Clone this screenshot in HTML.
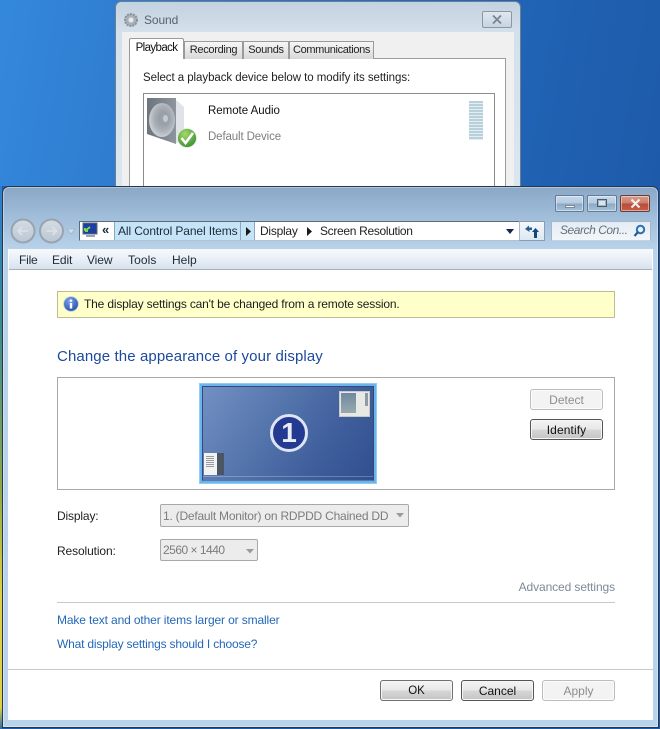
<!DOCTYPE html>
<html><head><meta charset="utf-8"><style>
*{box-sizing:border-box}
html,body{margin:0;padding:0}
body{width:660px;height:729px;position:relative;overflow:hidden;background:linear-gradient(100deg,#3488dc 0%,#2f7dd0 17%,#2266b8 60%,#1c55a4 100%);font-family:"Liberation Sans",sans-serif;font-size:12px;color:#1a1a1a}
div,span.a{position:absolute}
.t{position:absolute;white-space:nowrap;line-height:16px;height:16px}
.btn{position:absolute;border:1px solid #707070;border-radius:3px;background:linear-gradient(#f4f4f4 0%,#e8e8e8 48%,#d6d6d6 52%,#c4c4c4 100%);box-shadow:inset 0 0 0 1px #f6f6f6;text-align:center;line-height:20px;white-space:nowrap;color:#111}
.dis{border-color:#bcbcbc;background:#f3f3f3;color:#8d8d8d;box-shadow:inset 0 0 0 1px #fbfbfb}
.sel{position:absolute;border:1px solid #a8a8a8;border-radius:2px;background:#ececec;color:#7c7c7c;line-height:22px;padding-left:2px;white-space:nowrap}
.wb{position:absolute;top:195px;height:17px;border:1px solid #5f7c98;border-radius:2px;background:linear-gradient(#c6d9ea 0%,#b4cbe0 48%,#8ea9c4 52%,#a6c0d8 100%);box-shadow:inset 0 0 0 1px rgba(255,255,255,.45)}
.tab{position:absolute;border:1px solid #9a9a9a;border-bottom:0;background:linear-gradient(#f6f6f6,#d8d8d8);text-align:center;white-space:nowrap;color:#222;font-size:11px;letter-spacing:-.3px}
</style></head><body>

<!-- Sound window -->
<div style="left:115px;top:1px;width:406px;height:186px;border:1px solid #6a7e94;border-bottom:0;border-radius:6px 6px 0 0;background:linear-gradient(#c3d2e0 0,#d4e0ea 30px,#dbe6ef 100%)"></div>
<div style="left:122px;top:32px;width:392px;height:155px;background:#f0f0f0"></div>
<svg style="position:absolute;left:123px;top:12px" width="16" height="16" viewBox="0 0 16 16"><circle cx="8" cy="8" r="6" fill="#a8b0b8" stroke="#8a929a" stroke-dasharray="2 1" stroke-width="2"/><circle cx="8" cy="8" r="2.500" fill="#e8ecf0"/></svg>
<div class="t" style="left:144px;top:12px;color:#5a626c;font-size:12px;letter-spacing:-.1px">Sound</div>
<div style="left:482px;top:11px;width:30px;height:17px;border:1px solid #8a98a6;border-radius:2px;background:linear-gradient(#dfe8f0,#c8d4e0)"></div>
<svg style="position:absolute;left:491px;top:14px" width="12" height="11" viewBox="0 0 12 11"><path d="M2 1.500L10 9.500M10 1.500L2 9.500" stroke="#7a8490" stroke-width="1.800"/></svg>

<div style="left:129px;top:58px;width:377px;height:129px;background:#fff;border:1px solid #9c9c9c;border-bottom:0"></div>
<div class="tab" style="left:184px;top:41px;width:59px;height:18px;line-height:17px">Recording</div>
<div class="tab" style="left:243px;top:41px;width:46px;height:18px;line-height:17px">Sounds</div>
<div class="tab" style="left:289px;top:41px;width:85px;height:18px;line-height:17px;letter-spacing:-.35px">Communications</div>
<div class="tab" style="left:129px;top:38px;width:55px;height:21px;line-height:19px;background:#fff;font-size:11.500px;letter-spacing:-.6px;color:#111;border-radius:2px 2px 0 0">Playback</div>

<div class="t" style="left:143px;top:70px;font-size:11.500px;color:#222;letter-spacing:-.06px">Select a playback device below to modify its settings:</div>
<div style="left:143px;top:93px;width:352px;height:94px;border:1px solid #8c8c8c;border-bottom:0;background:#fff"></div>
<svg style="position:absolute;left:146px;top:97px" width="54" height="52" viewBox="0 0 54 52">
<defs><linearGradient id="sp" x1="0" y1="0" x2="1" y2="0"><stop offset="0" stop-color="#6c747e"/><stop offset="1" stop-color="#8e959e"/></linearGradient>
<radialGradient id="cone" cx=".55" cy=".45" r=".6"><stop offset="0" stop-color="#8a9098"/><stop offset=".6" stop-color="#aab0b6"/><stop offset="1" stop-color="#d4d8dc"/></radialGradient>
<radialGradient id="ck" cx=".4" cy=".3" r=".8"><stop offset="0" stop-color="#a6d86a"/><stop offset="1" stop-color="#2f8a2c"/></radialGradient></defs>
<path d="M29 2L38 10L38 40L29 47Z" fill="#dfe2e6"/>
<path d="M1 1L30 1L30 47L1 37Z" fill="url(#sp)"/>
<ellipse cx="16" cy="23" rx="13" ry="17" fill="url(#cone)"/>
<ellipse cx="19" cy="22" rx="5" ry="7" fill="#9aa1a8"/>
<ellipse cx="19.500" cy="21.500" rx="2.500" ry="3.500" fill="#c4c9ce"/>
<circle cx="41" cy="41" r="9.500" fill="url(#ck)" stroke="#e4ede0" stroke-width=".8"/>
<path d="M35.500 41L39.500 46L47 36" fill="none" stroke="#fff" stroke-width="2.600"/>
</svg>
<div class="t" style="left:208px;top:103px;font-size:11.500px;color:#111;letter-spacing:-.03px">Remote Audio</div>
<div class="t" style="left:208px;top:129px;font-size:11.500px;color:#7e7e7e;letter-spacing:-.13px">Default Device</div>
<div style="left:469px;top:101px;width:14px;height:39px;background:repeating-linear-gradient(#b7d1dc 0,#b7d1dc 2px,#e4eef2 2px,#e4eef2 3px)"></div>

<!-- Main window -->
<div style="left:0;top:186px;width:2px;height:543px;background:linear-gradient(#2f7dd0 0,#3a8a90 25%,#8aa84a 55%,#e0d040 75%,#e0d040 96%,#2a6ab0 100%)"></div>
<div style="left:2px;top:186px;width:658px;height:543px;background:#1f5aa8"></div>
<div style="left:2px;top:186px;width:657px;height:542px;border:1px solid #26384e;border-radius:7px 7px 0 0;background:linear-gradient(#8aa8c6 0,#a0bdda 30px,#b9d3ea 64px,#b9d3ea 100%)"></div>
<div style="left:3px;top:187px;width:655px;height:540px;border:1px solid rgba(255,255,255,.35);border-radius:6px 6px 0 0"></div>
<div style="left:8px;top:249px;width:645px;height:471px;background:#fff"></div>

<div class="wb" style="left:555px;width:29px"></div>
<div style="left:565px;top:205px;width:10px;height:3px;background:#f0f4f8;border:1px solid #7a8a9c"></div>
<div class="wb" style="left:587px;width:30px"></div>
<div style="left:597px;top:199px;width:10px;height:8px;border:1px solid #4a5a6a;background:#d8e4ee;box-shadow:inset 0 0 0 1px #9fb4c8"></div>
<div class="wb" style="left:620px;width:30px;border-color:#6a3c34;background:linear-gradient(#d89c8c 0%,#cc7c6a 48%,#b84c38 52%,#c4604a 100%)"></div>
<svg style="position:absolute;left:629px;top:198px" width="13" height="11" viewBox="0 0 13 11"><path d="M2.500 1.500L10.500 9.500M10.500 1.500L2.500 9.500" stroke="#f4eeec" stroke-width="2.200"/></svg>

<!-- Nav -->
<svg style="position:absolute;left:9px;top:216px" width="72" height="30" viewBox="0 0 72 30">
<defs><linearGradient id="nv" x1="0" y1="0" x2="0" y2="1"><stop offset="0" stop-color="#d4dce4"/><stop offset=".5" stop-color="#c8d2dc"/><stop offset="1" stop-color="#bac6d2"/></linearGradient></defs>
<circle cx="14" cy="15" r="11.500" fill="url(#nv)" stroke="#98a4b0" stroke-width="2"/>
<circle cx="42.500" cy="15" r="11.500" fill="url(#nv)" stroke="#98a4b0" stroke-width="2"/>
<path d="M19 15H9M13 11L9 15L13 19" fill="none" stroke="#dbe2e9" stroke-width="1.600"/>
<path d="M37.500 15H47.500M43.500 11L47.500 15L43.500 19" fill="none" stroke="#dbe2e9" stroke-width="1.600"/>
<path d="M58 13H66L62 18Z" fill="#d4dfe9" stroke="#a4b4c4" stroke-width=".8"/>
</svg>

<!-- Address -->
<div style="left:79px;top:221px;width:441px;height:20px;background:#fff;border:1px solid #5a6b7c;border-right-color:#9fb0c0;border-bottom-color:#b4c2d0"></div>
<svg style="position:absolute;left:82px;top:222px" width="17" height="17" viewBox="0 0 17 17"><rect x="1" y="1" width="14" height="11" fill="#1e3ea0" stroke="#5c6a80"/><path d="M3 9L8 5M3 9L3 6M3 9L6 9" stroke="#6fe04a" stroke-width="2" fill="none"/><rect x="4" y="13" width="9" height="2" fill="#9aa4ae"/></svg>
<div class="t" style="left:102px;top:222px;font-size:13px;font-weight:bold;color:#1a2a3a;line-height:16px">«</div>
<div style="left:114px;top:222px;width:127px;height:18px;background:#c6e4f8;border-left:1px solid #8aa8c0;border-right:1px solid #8aa8c0"></div>
<div class="t" style="left:118px;top:223px;font-size:12px;color:#1a2a3a;letter-spacing:-.11px">All Control Panel Items</div>
<div style="left:241px;top:222px;width:14px;height:18px;background:#c6e4f8;border-right:1px solid #8aa8c0"></div>
<svg style="position:absolute;left:246px;top:227px" width="6" height="9"><path d="M0 0L5 4.500L0 9Z" fill="#1a1a1a"/></svg>
<div class="t" style="left:260px;top:223px;font-size:12px;letter-spacing:-.25px;color:#222">Display</div>
<svg style="position:absolute;left:307px;top:227px" width="6" height="9"><path d="M0 0L5 4.500L0 9Z" fill="#1a1a1a"/></svg>
<div class="t" style="left:320px;top:223px;font-size:12px;letter-spacing:-.32px;color:#222">Screen Resolution</div>
<svg style="position:absolute;left:506px;top:229px" width="9" height="5"><path d="M0 0H8L4 5Z" fill="#16254a"/></svg>
<div style="left:519px;top:221px;width:26px;height:20px;background:linear-gradient(#f4f8fb,#dde8f1);border:1px solid #8a9cae;border-left-color:#a8b8c8"></div>
<svg style="position:absolute;left:524px;top:224px" width="16" height="15" viewBox="0 0 16 15"><path d="M1 5L5 1.500V3.500H8V6H5.500V8Z" fill="#2a5f98"/><path d="M15 8L11.500 4L8 8H10V14H13V8Z" fill="#16467c"/></svg>
<div style="left:551px;top:221px;width:100px;height:20px;background:linear-gradient(#e3ecf4,#f2f6fa);border:1px solid #a4b6c8;border-bottom-color:#c4d2de"></div>
<div class="t" style="left:560px;top:222px;font-size:12px;font-style:italic;color:#68717a;letter-spacing:-.45px">Search Con...</div>
<svg style="position:absolute;left:632px;top:224px" width="14" height="14" viewBox="0 0 14 14"><circle cx="8.500" cy="5.500" r="3.700" fill="none" stroke="#2a70b8" stroke-width="2"/><path d="M6 8L2.500 12" stroke="#1f5a9a" stroke-width="2.200"/></svg>

<!-- Menu -->
<div style="left:9px;top:249px;width:643px;height:21px;background:linear-gradient(#f6f9fc 0,#eef3f8 35%,#d7e2ee 100%);border-bottom:1px solid #a8b0b8"></div>
<div class="t" style="left:19px;top:252px;font-size:12px;color:#1e2a36;letter-spacing:-.2px">File</div>
<div class="t" style="left:52px;top:252px;font-size:12px;color:#1e2a36;letter-spacing:-.1px">Edit</div>
<div class="t" style="left:87px;top:252px;font-size:12px;color:#1e2a36;letter-spacing:-.1px">View</div>
<div class="t" style="left:128px;top:252px;font-size:12px;color:#1e2a36;letter-spacing:.1px">Tools</div>
<div class="t" style="left:172px;top:252px;font-size:12px;color:#1e2a36">Help</div>

<!-- Notice -->
<div style="left:57px;top:291px;width:558px;height:27px;background:#ffffc9;border:1px solid #bcbc98"></div>
<svg style="position:absolute;left:63px;top:296px" width="16" height="16" viewBox="0 0 16 16"><defs><radialGradient id="inf" cx=".4" cy=".3" r=".8"><stop offset="0" stop-color="#7da4e8"/><stop offset="1" stop-color="#1c45a8"/></radialGradient></defs><circle cx="8" cy="8" r="7.300" fill="url(#inf)" stroke="#b8c8e0" stroke-width=".8"/><rect x="6.800" y="7" width="2.400" height="5.500" fill="#fff"/><rect x="6.800" y="3.500" width="2.400" height="2.300" fill="#fff"/></svg>
<div class="t" style="left:84px;top:296px;font-size:12px;color:#1e1e1e;letter-spacing:-.17px">The display settings can't be changed from a remote session.</div>

<div class="t" style="left:57px;top:349px;font-size:15px;color:#1c4a9c;letter-spacing:.11px">Change the appearance of your display</div>

<!-- Monitor box -->
<div style="left:57px;top:377px;width:558px;height:113px;border:1px solid #a8a8a8;background:#fff"></div>
<div style="left:199px;top:383px;width:178px;height:101px;background:#6cb4ec;border:1px solid #94ccf2"></div>
<div style="left:202px;top:386px;width:172px;height:95px;border:1px solid #33487c;border-bottom-color:#5a78aa;background:linear-gradient(125deg,#7290c2 0%,#5474ac 40%,#3f5e9c 70%,#314f8e 100%)"></div>
<div style="left:203px;top:476px;width:170px;height:1px;background:rgba(255,255,255,.25)"></div>
<div style="left:270px;top:414px;width:38px;height:38px;border-radius:50%;background:#233a90;border:3px solid #dde4f4"></div>
<div class="t" style="left:270px;top:414px;width:38px;height:38px;line-height:38px;text-align:center;font-size:28px;font-weight:bold;color:#e8edf8">1</div>
<div style="left:339px;top:391px;width:31px;height:26px;background:#e8e8e4;border:1px solid #c8c8c4"></div>
<div style="left:341px;top:393px;width:15px;height:20px;background:linear-gradient(#7088a0,#98aab0)"></div>
<div style="left:365px;top:393px;width:3px;height:13px;background:#8f9aa4"></div>
<div style="left:204px;top:453px;width:20px;height:22px;background:#4a5664"></div>
<div style="left:204px;top:453px;width:13px;height:22px;background:#f2f2f2"></div>
<div style="left:206px;top:456px;width:8px;height:11px;background:repeating-linear-gradient(#9a9a9a 0,#9a9a9a 1px,#f2f2f2 1px,#f2f2f2 2px)"></div>

<div class="btn dis" style="left:530px;top:389px;width:73px;height:21px">Detect</div>
<div class="btn" style="left:530px;top:419px;width:73px;height:21px;border-color:#555;letter-spacing:.1px">Identify</div>

<div class="t" style="left:57px;top:508px;font-size:12px;color:#222;letter-spacing:-.15px">Display:</div>
<div class="sel" style="left:160px;top:504px;width:249px;height:23px;letter-spacing:-.22px">1. (Default Monitor) on RDPDD Chained DD</div>
<svg style="position:absolute;left:396px;top:513px" width="9" height="5"><path d="M0 0H8L4 4.500Z" fill="#9a9a9a"/></svg>
<div class="t" style="left:57px;top:543px;font-size:12px;color:#222;letter-spacing:-.12px">Resolution:</div>
<div class="sel" style="left:160px;top:539px;width:98px;height:22px;line-height:21px;letter-spacing:-.5px">2560 × 1440</div>
<svg style="position:absolute;left:246px;top:549px" width="9" height="5"><path d="M0 0H8L4 4.500Z" fill="#9a9a9a"/></svg>

<div class="t" style="right:45px;top:579px;font-size:12px;color:#7c8a98;letter-spacing:-.1px">Advanced settings</div>
<div style="left:57px;top:602px;width:558px;height:1px;background:#c8c8c8"></div>
<div class="t" style="left:57px;top:612px;font-size:12px;color:#2468b8;letter-spacing:-.13px">Make text and other items larger or smaller</div>
<div class="t" style="left:57px;top:636px;font-size:12px;color:#2468b8;letter-spacing:-.19px">What display settings should I choose?</div>
<div style="left:8px;top:669px;width:645px;height:1px;background:#c8c8c8"></div>

<div class="btn" style="left:380px;top:680px;width:73px;height:21px;font-size:11.500px">OK</div>
<div class="btn" style="left:461px;top:680px;width:73px;height:21px;border-color:#555">Cancel</div>
<div class="btn dis" style="left:542px;top:680px;width:73px;height:21px">Apply</div>

</body></html>
